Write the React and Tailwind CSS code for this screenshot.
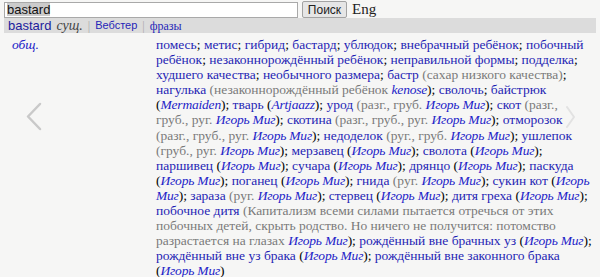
import React from 'react';

const L = ({ children }) => <span className="text-[#1f1fb4]">{children}</span>;
const G = ({ children }) => <span className="text-[#7a7a7a]">{children}</span>;
const A = ({ children }) => <span className="italic tracking-[-0.2px] text-[#2323c8]">{children}</span>;
const IM = () => <A>Игорь Миг</A>;

const lines = [
  <><L>помесь</L>; <L>метис</L>; <L>гибрид</L>; <L>бастард</L>; <L>ублюдок</L>; <L>внебрачный ребёнок</L>; <L>побочный</L></>,
  <><L>ребёнок</L>; <L>незаконнорождённый ребёнок</L>; <L>неправильной формы</L>; <L>подделка</L>;</>,
  <><L>худшего качества</L>; <L>необычного размера</L>; <L>бастр</L> <G>(сахар низкого качества)</G>;</>,
  <><L>нагулька</L> <G>(незаконнорождённый ребёнок</G> <A>kenose</A>); <L>сволочь</L>; <L>байстрюк</L></>,
  <>(<A>Mermaiden</A>); <L>тварь</L> (<A>Artjaazz</A>); <L>урод</L> <G>(разг., груб.</G> <IM />); <L>скот</L> <G>(разг.,</G></>,
  <><G>груб., руг.</G> <IM />); <L>скотина</L> <G>(разг., груб., руг.</G> <IM />); <L>отморозок</L></>,
  <><G>(разг., груб., руг.</G> <IM />); <L>недоделок</L> <G>(руг., груб.</G> <IM />); <L>ушлепок</L></>,
  <><G>(груб., руг.</G> <IM />); <L>мерзавец</L> (<IM />); <L>сволота</L> (<IM />);</>,
  <><L>паршивец</L> (<IM />); <L>сучара</L> (<IM />); <L>дрянцо</L> (<IM />); <L>паскуда</L></>,
  <>(<IM />); <L>поганец</L> (<IM />); <L>гнида</L> <G>(руг.</G> <IM />); <L>сукин кот</L> (<A>Игорь</A></>,
  <><A>Миг</A>); <L>зараза</L> <G>(руг.</G> <IM />); <L>стервец</L> (<IM />); <L>дитя греха</L> (<IM />);</>,
  <><L>побочное дитя</L> <G>(Капитализм всеми силами пытается отречься от этих</G></>,
  <><G>побочных детей, скрыть родство. Но ничего не получится: потомство</G></>,
  <><G>разрастается на глазах</G> <IM />); <L>рождённый вне брачных уз</L> (<IM />);</>,
  <><L>рождённый вне уз брака</L> (<IM />); <L>рождённый вне законного брака</L></>,
  <>(<IM />)</>,
];

export default function App() {
  return (
    <div className="relative w-[600px] h-[277px] overflow-hidden bg-[#f6f6f5] font-['Liberation_Serif']">
      <div className="flex items-center h-[18px] pl-1 pt-px">
        <div className="w-[294px] h-[16px] border border-[#a9a9a9] bg-white flex items-center px-[2px]">
          <span className="font-['Liberation_Sans'] text-[13px] leading-[13px] bg-[#cbcbcb] text-[#111]">bastard</span>
        </div>
        <button className="ml-[4px] w-[45px] h-[17px] border border-[#a3a3a3] rounded-[2px] bg-[#e6e6e6] font-['Liberation_Sans'] text-[12px] leading-[12px] text-[#222]">
          Поиск
        </button>
        <span className="ml-[5px] text-[15px] text-[#222] leading-[15px]">Eng</span>
      </div>
      <div className="flex items-center h-[15px] ml-1 mr-1 bg-[#dcdcdc] pl-1 gap-[5px]">
        <span className="font-['Liberation_Sans'] text-[13px] text-[#1c1c9c]">bastard</span>
        <span className="italic text-[14px] text-[#444]">сущ.</span>
        <span className="text-[12px] text-[#aaa]">|</span>
        <span className="font-['Liberation_Sans'] text-[11px] text-[#2626b8]">Вебстер</span>
        <span className="text-[12px] text-[#aaa]">|</span>
        <span className="text-[12px] text-[#2626b8]">фразы</span>
      </div>
      <div className="flex mt-[4px] text-[13.5px] leading-[15.1px]">
        <div className="w-[156px] pl-[12px] italic text-[#2323c8] shrink-0">общ.</div>
        <div className="w-[440px]">
          {lines.map((line, i) => (
            <div key={i} className="whitespace-nowrap">{line}</div>
          ))}
        </div>
      </div>
      <svg className="absolute left-[24px] top-[101px]" width="22" height="32" viewBox="0 0 22 32">
        <polyline points="16,3 4,15.5 16,28" fill="none" stroke="#c9c9c9" strokeWidth="2.5" strokeLinecap="round" strokeLinejoin="round" />
      </svg>
      <svg className="absolute left-[563px] top-[104px]" width="16" height="28" viewBox="0 0 16 28">
        <polyline points="4,3 11,13 4,23" fill="none" stroke="#e2e2e2" strokeWidth="2" strokeLinecap="round" strokeLinejoin="round" />
      </svg>
    </div>
  );
}
